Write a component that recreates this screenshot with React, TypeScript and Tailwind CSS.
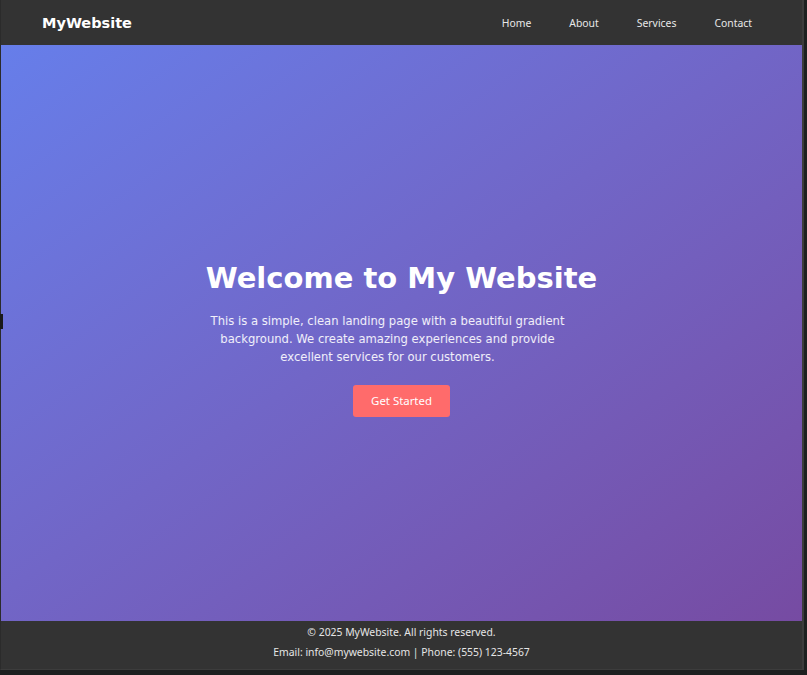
const links = ["Home", "About", "Services", "Contact"]

export default function App() {
  return (
    <div className="min-h-[675px] bg-[#1d2020] relative">
      {/* little dark tab on the left edge */}
      <div className="absolute left-0 top-[314px] w-[3px] h-[15px] bg-[#1a1a1a] z-10"></div>
      <div className="w-[804px] h-[670px] flex flex-col bg-[#333] border-l border-l-[#2b2b2b] border-r-[2px] border-r-[#3c3c3c] border-b border-b-[#3c3c3c]">
        <header className="h-[45px] shrink-0 flex items-center justify-between pt-[2px] pl-[41px] pr-[50px] bg-[#333]">
          <div className="text-white font-bold text-[14.5px] font-['DejaVu_Sans',sans-serif]">MyWebsite</div>
          <nav className="flex gap-[38px] text-[10.4px] text-[#e8e8e8] font-['Noto_Sans',sans-serif]">
            {links.map((l) => (
              <a key={l} href="#" className="hover:text-white">
                {l}
              </a>
            ))}
          </nav>
        </header>

        <main className="flex-1 flex flex-col items-center justify-center pt-[11px] bg-gradient-to-br from-[#667eea] to-[#764ba2] text-center font-['DejaVu_Sans',sans-serif]">
          <h1 className="text-white font-bold text-[29px] leading-[36px] mb-[16px]">Welcome to My Website</h1>
          <p className="text-white/90 text-[11.6px] leading-[18px] max-w-[408px] pr-[28px] mb-[19px]">
            This is a simple, clean landing page with a beautiful gradient background. We create amazing experiences and
            provide excellent services for our customers.
          </p>
          <button className="bg-[#ff6b6b] text-white text-[11.4px] font-['Noto_Sans',sans-serif] w-[97px] h-[32px] rounded-[3px]">
            Get Started
          </button>
        </main>

        <footer className="h-[48px] shrink-0 flex flex-col items-center pt-[1px] text-[10.4px] leading-[20px] text-[#e6e6e6] font-['Noto_Sans',sans-serif]">
          <p>© 2025 MyWebsite. All rights reserved.</p>
          <p>Email: info@mywebsite.com | Phone: (555) 123-4567</p>
        </footer>
      </div>
    </div>
  )
}
